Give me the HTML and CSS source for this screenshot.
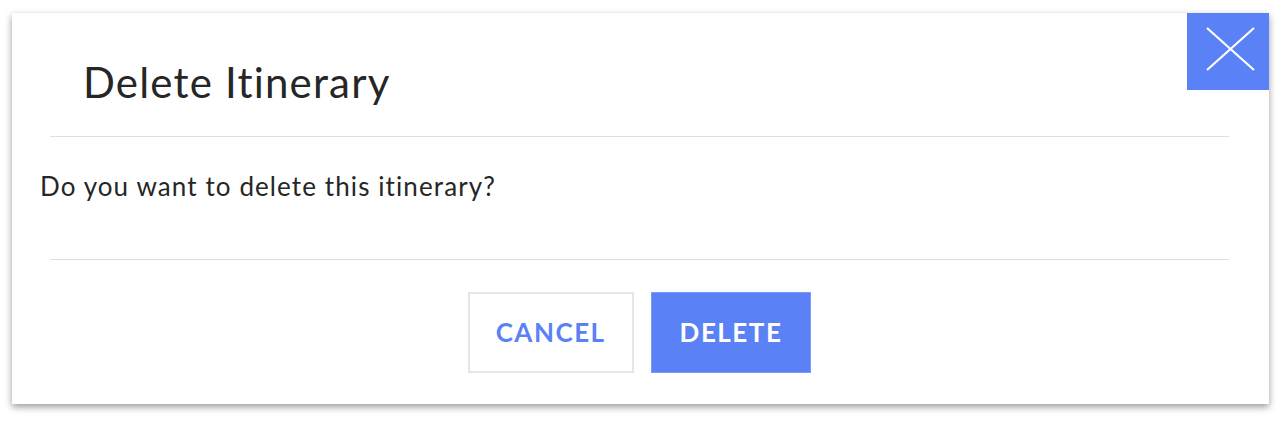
FILE: index.html
```html
<!DOCTYPE html>
<html lang="en">
  <head>
    <meta charset="UTF-8" />
    <meta name="viewport" content="width=device-width, initial-scale=1.0" />
    <title>Delete Itinerary</title>
    <link rel="stylesheet" href="styles.css">
  </head>
  <body>
    <div class="dialog">
      <div class="dialog-header">
        <h2 class="dialog-title">Delete Itinerary</h2>
      </div>

      <div class="dialog-body">
        <p>Do you want to delete this itinerary?</p>
      </div>

      <div class="dialog-footer">
        <button type="button" class="btn btn-cancel">CANCEL</button>
        <button type="button" class="btn btn-delete">DELETE</button>
      </div>

      <button type="button" class="close-btn" aria-label="Close">
        <svg width="82" height="77" viewBox="0 0 82 77">
          <line x1="20" y1="15" x2="67" y2="57" stroke="#fff" stroke-width="2.2" />
          <line x1="67" y1="15" x2="20" y2="57" stroke="#fff" stroke-width="2.2" />
        </svg>
      </button>
    </div>
  </body>
</html>
```

FILE: styles.css
```css
body {
  font-family: Lato, "Noto Sans", sans-serif;
  margin: 0;
  padding: 13px 15px 18px 12px;
  background: #fff;
}

.dialog {
  position: relative;
  width: 1257px;
  height: 391px;
  box-sizing: border-box;
  background: #fff;
  box-shadow: 0 3px 7px rgba(0, 0, 0, 0.4);
}

.dialog-header {
  margin: 0 40px 0 38px;
  padding: 44px 0 29px 33px;
  border-bottom: 1px solid #e0e0e0;
}

.dialog-title {
  margin: 0;
  font-size: 42px;
  font-weight: 400;
  line-height: 1.2;
  letter-spacing: 1.2px;
  color: #262626;
}

.dialog-body {
  padding: 34px 0 56px 28px;
}

.dialog-body p {
  margin: 0;
  font-size: 26px;
  line-height: 1.2;
  letter-spacing: 1.1px;
  color: #262626;
}

.dialog-footer {
  display: flex;
  justify-content: center;
  gap: 17px;
  margin: 0 40px 0 38px;
  padding: 32px 0 30px;
  border-top: 1px solid #e0e0e0;
}

.btn {
  height: 81px;
  padding: 0 28px;
  font-family: Lato, "Noto Sans", sans-serif;
  font-size: 26px;
  font-weight: 700;
  letter-spacing: 1.5px;
  cursor: pointer;
}

.btn-cancel {
  padding: 0 26px;
  background: #fff;
  color: #5a81f6;
  border: 2px solid #e6e6e6;
}

.btn-delete {
  background: #5a81f6;
  color: #fff;
  border: 1px solid #7b9af7;
}

.close-btn {
  position: absolute;
  top: 0;
  right: 0;
  width: 82px;
  height: 77px;
  padding: 0;
  border: none;
  background: #5a81f6;
  cursor: pointer;
}

.close-btn svg {
  display: block;
}
```
